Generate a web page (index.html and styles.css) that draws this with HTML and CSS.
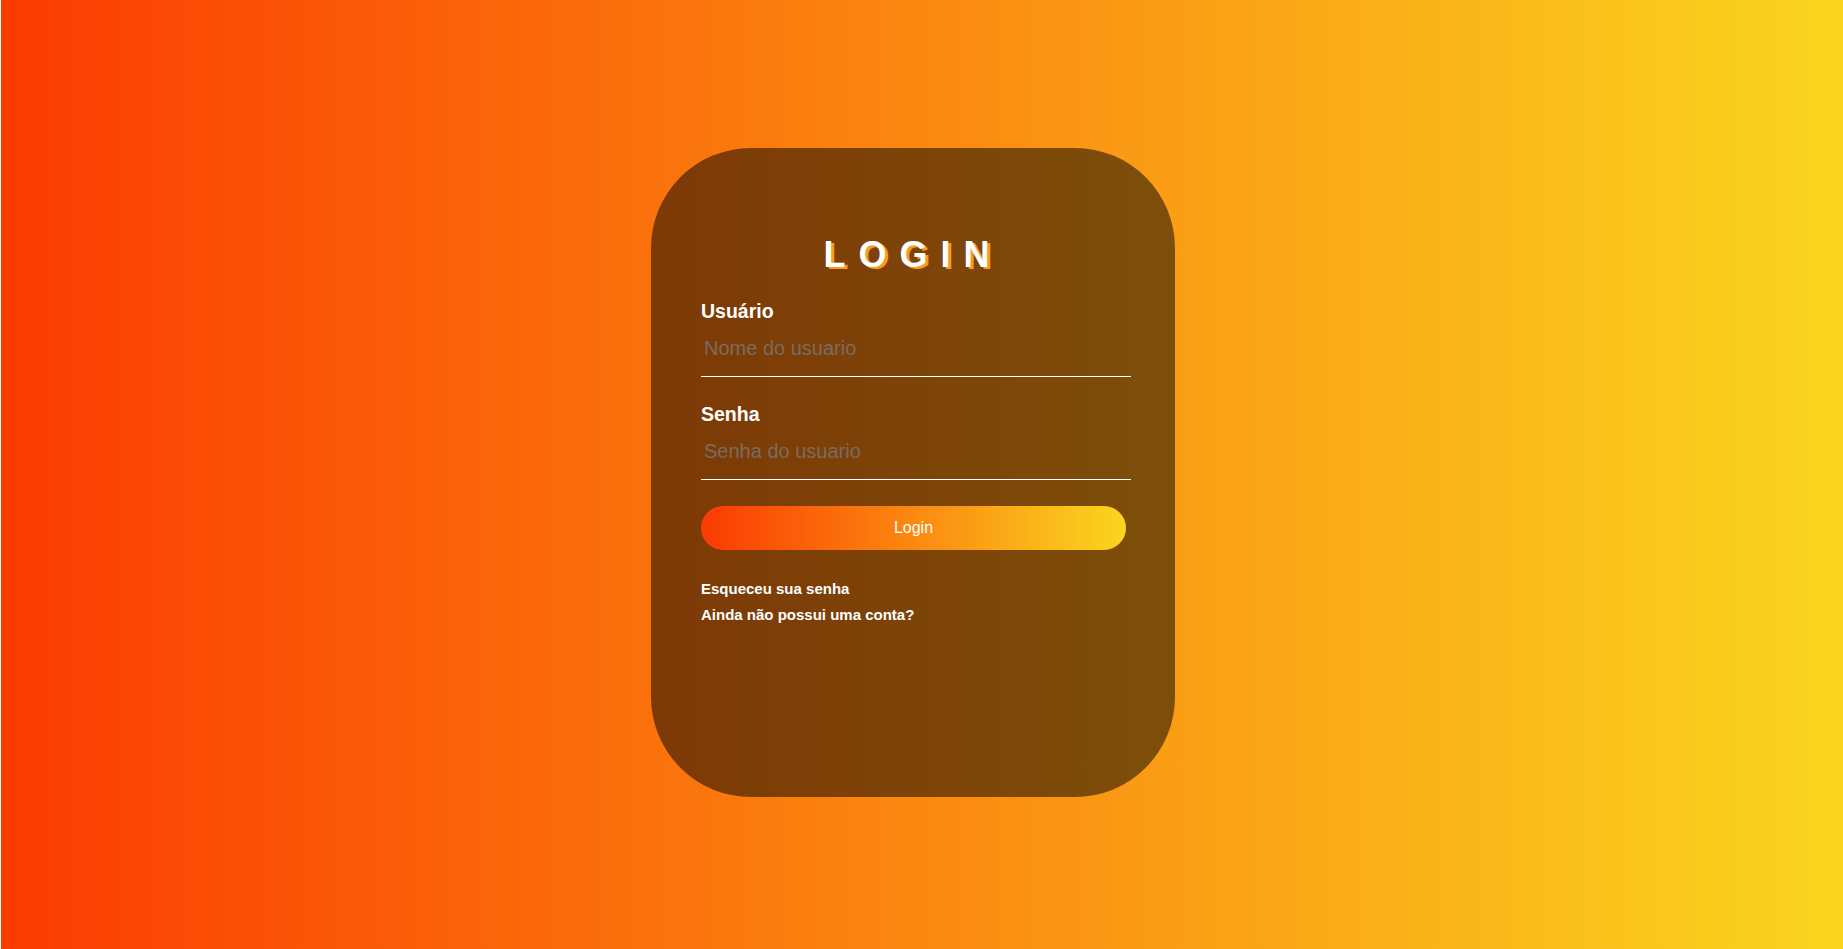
FILE: index.html
```html
<!DOCTYPE html>
<html lang="pt-BR">
<head>
<meta charset="utf-8">
<title>Login</title>
<link rel="stylesheet" href="styles.css">
</head>
<body>
<main class="page">
  <form class="card">
    <h1 class="title">LOGIN</h1>
    <label class="label" for="user">Usuário</label>
    <input class="field" id="user" type="text" placeholder="Nome do usuario">
    <label class="label label-gap" for="pass">Senha</label>
    <input class="field" id="pass" type="password" placeholder="Senha do usuario">
    <button class="btn" type="button">Login</button>
    <div class="links">
      <a class="link" href="#">Esqueceu sua senha</a>
      <a class="link" href="#">Ainda não possui uma conta?</a>
    </div>
  </form>
</main>
</body>
</html>
```
FILE: styles.css
```css
html {
  background: #ffffff;
  margin: 0;
  padding: 0;
}
body {
  margin: 0 0 0 1px;
  height: 100vh;
  background: linear-gradient(to right, #fb3b02, #fad61f);
  font-family: "Liberation Sans", Arial, sans-serif;
  overflow: hidden;
}
.page {
  box-sizing: border-box;
  height: 100%;
  display: flex;
  align-items: center;
  justify-content: center;
  padding-right: 18px;
  padding-bottom: 4px;
}
.card {
  box-sizing: border-box;
  width: 524px;
  height: 649px;
  padding: 86px 50px 0 50px;
  background: rgba(0, 0, 0, 0.5);
  border-radius: 100px;
  display: flex;
  flex-direction: column;
  align-items: flex-start;
}
.title {
  align-self: stretch;
  margin: 0 0 25px 0;
  font-size: 36px;
  line-height: 41px;
  font-weight: 700;
  letter-spacing: 13px;
  text-align: center;
  color: #ffffff;
  text-shadow: 3px 2px 0 #f89b24;
}
.label {
  display: block;
  font-size: 19.5px;
  line-height: 22px;
  font-weight: 700;
  color: #ffffff;
}
.label-gap {
  margin-top: 26px;
}
.field {
  display: block;
  box-sizing: content-box;
  width: 100%;
  margin: 0;
  padding: 15px 3px 16px 3px;
  border: none;
  border-bottom: 1px solid #ffffff;
  background: transparent;
  outline: none;
  color: #ffffff;
  font-family: "Liberation Sans", Arial, sans-serif;
  font-size: 20px;
  line-height: 23px;
  height: 23px;
}
.field::placeholder {
  color: #7a6c60;
}
.btn {
  display: block;
  box-sizing: border-box;
  width: 425px;
  height: 44px;
  margin-top: 26px;
  padding: 0;
  border: none;
  border-radius: 22px;
  background: linear-gradient(to right, #fb3b02, #fad61f);
  color: #ffffff;
  font-family: "Liberation Sans", Arial, sans-serif;
  font-size: 16px;
  cursor: pointer;
}
.links {
  margin-top: 26px;
  display: flex;
  flex-direction: column;
}
.link {
  display: block;
  font-size: 15px;
  line-height: 25.5px;
  font-weight: 700;
  color: #ffffff;
  text-decoration: none;
}
```
